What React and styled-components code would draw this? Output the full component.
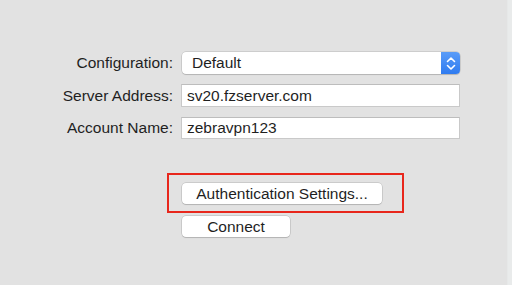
import React from 'react';
import styled, { createGlobalStyle } from 'styled-components';

const Global = createGlobalStyle`
  html, body {
    margin: 0;
    padding: 0;
    background: #e2e2e2;
  }
  * { box-sizing: border-box; }
`;

const Window = styled.div`
  display: flex;
  width: 512px;
  height: 285px;
  font-family: "Liberation Sans", Arial, sans-serif;
  font-size: 15.5px;
  color: #1f1f1f;
`;

const Pane = styled.div`
  flex: 1;
  padding-top: 52px;
`;

const Edge = styled.div`
  width: 5px;
  background: #e9ebeb;
  border-left: 1px solid #e6e8e8;
`;

const Form = styled.div`
  display: grid;
  grid-template-columns: 173px 279px;
  column-gap: 8px;
  row-gap: 10px;
  align-items: center;
`;

const Label = styled.label`
  text-align: right;
  white-space: nowrap;
`;

const Select = styled.div`
  display: flex;
  height: 22px;
  margin-left: 1px;
  border-radius: 4px;
  background: #fff;
  box-shadow: 0 0 0 0.5px rgba(0, 0, 0, 0.18), 0 1px 1px rgba(0, 0, 0, 0.12);
  overflow: hidden;
`;

const SelectValue = styled.div`
  flex: 1;
  display: flex;
  align-items: center;
  padding-left: 10px;
`;

const Stepper = styled.div`
  width: 19px;
  display: flex;
  align-items: center;
  justify-content: center;
  background: linear-gradient(#5a9cf8, #2f7bf0);
`;

const Field = styled.div`
  height: ${p => p.$h || 23}px;
  display: flex;
  align-items: center;
  padding-left: 5px;
  background: #fff;
  border: 1px solid #c9c9c9;
  border-top-color: #bdbdbd;
`;

const Actions = styled.div`
  display: flex;
  flex-direction: column;
  align-items: flex-start;
  margin-top: 34px;
  margin-left: 167px;
`;

const Highlight = styled.div`
  width: 237px;
  height: 40px;
  border: 2px solid #e8271c;
  padding: 8px 0 0 13px;
`;

const Button = styled.button`
  width: ${p => p.$w}px;
  height: 21px;
  margin-left: ${p => p.$ml || 0}px;
  margin-top: ${p => p.$mt || 0}px;
  padding: 0;
  border: none;
  border-radius: 4px;
  background: #fff;
  box-shadow: 0 0 0 0.5px rgba(0, 0, 0, 0.2), 0 1px 1px rgba(0, 0, 0, 0.12);
  font-family: inherit;
  font-size: 15.5px;
  color: #1f1f1f;
  text-align: center;
`;

const Chevrons = () => (
  <svg width="10" height="15" viewBox="0 0 10 15" fill="none" stroke="#fff" strokeWidth="1.6" strokeLinecap="round" strokeLinejoin="round">
    <path d="M1.5 5.5 L5 2 L8.5 5.5" />
    <path d="M1.5 9.5 L5 13 L8.5 9.5" />
  </svg>
);

export default function App() {
  return (
    <>
      <Global />
      <Window>
        <Pane>
          <Form>
            <Label>Configuration:</Label>
            <Select>
              <SelectValue>Default</SelectValue>
              <Stepper><Chevrons /></Stepper>
            </Select>
            <Label>Server Address:</Label>
            <Field>sv20.fzserver.com</Field>
            <Label>Account Name:</Label>
            <Field $h={22}>zebravpn123</Field>
          </Form>
          <Actions>
            <Highlight>
              <Button $w={200}>Authentication Settings...</Button>
            </Highlight>
            <Button $w={108} $ml={15} $mt={3}>Connect</Button>
          </Actions>
        </Pane>
        <Edge />
      </Window>
    </>
  );
}
